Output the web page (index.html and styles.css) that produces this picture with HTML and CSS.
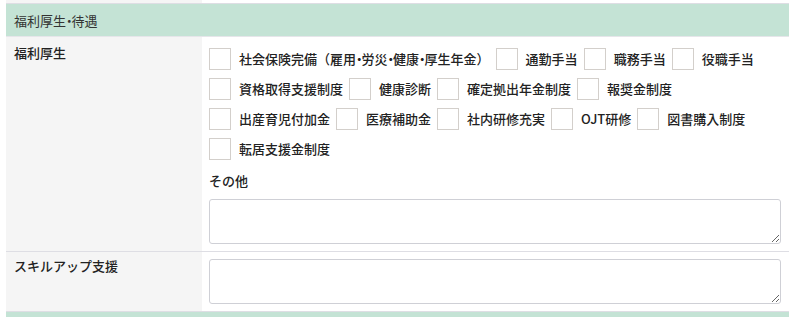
FILE: index.html
```html
<!DOCTYPE html>
<html lang="ja">
<head>
<meta charset="utf-8">
<link rel="stylesheet" href="styles.css">
</head>
<body>
<div class="form">
  <div class="prev-row"><div class="prev-label"></div><div class="prev-body"></div></div>
  <div class="section-head">福利厚生<span class="dot">・</span>待遇</div>
  <div class="row row-first">
    <div class="row-label">福利厚生</div>
    <div class="row-body">
      <div class="checks">
        <label class="check"><span class="box"></span><span class="txt">社会保険完備（雇用<span class="dot">・</span>労災<span class="dot">・</span>健康<span class="dot">・</span>厚生年金）</span></label>
        <label class="check"><span class="box"></span><span class="txt">通勤手当</span></label>
        <label class="check"><span class="box"></span><span class="txt">職務手当</span></label>
        <label class="check"><span class="box"></span><span class="txt">役職手当</span></label>
        <label class="check"><span class="box"></span><span class="txt">資格取得支援制度</span></label>
        <label class="check"><span class="box"></span><span class="txt">健康診断</span></label>
        <label class="check"><span class="box"></span><span class="txt">確定拠出年金制度</span></label>
        <label class="check"><span class="box"></span><span class="txt">報奨金制度</span></label>
        <label class="check"><span class="box"></span><span class="txt">出産育児付加金</span></label>
        <label class="check"><span class="box"></span><span class="txt">医療補助金</span></label>
        <label class="check"><span class="box"></span><span class="txt">社内研修充実</span></label>
        <label class="check"><span class="box"></span><span class="txt">OJT研修</span></label>
        <label class="check"><span class="box"></span><span class="txt">図書購入制度</span></label>
        <label class="check"><span class="box"></span><span class="txt">転居支援金制度</span></label>
      </div>
      <div class="sub-label">その他</div>
      <textarea class="area"></textarea>
    </div>
  </div>
  <div class="row row-second">
    <div class="row-label">スキルアップ支援</div>
    <div class="row-body">
      <textarea class="area"></textarea>
    </div>
  </div>
  <div class="section-head next"></div>
</div>
</body>
</html>
```

FILE: styles.css
```css
* { box-sizing: border-box; }
html, body { margin: 0; padding: 0; background: #fff; }
body {
  font-family: "Noto Sans CJK JP", "Noto Sans", sans-serif;
  font-size: 13px;
  color: #222;
}
.form {
  margin-left: 6px;
  width: 783px;
}
.prev-row {
  display: grid;
  grid-template-columns: 196px 1fr;
  height: 4px;
  border-bottom: 1px solid #dedee4;
}
.prev-label { background: #f5f5f5; }
.section-head {
  background: #c4e3d5;
  height: 33px;
  line-height: 33px;
  padding-left: 8px;
  color: #333;
  font-weight: 400;
  border-bottom: 1px solid #e6e6ea;
}
.section-head.next { height: 5px; border-bottom: none; }
.dot {
  font-feature-settings: "halt";
  letter-spacing: -1px;
}
.row {
  display: grid;
  grid-template-columns: 196px 1fr;
  border-bottom: 1px solid #dedee4;
}
.row-label {
  background: #f5f5f5;
  padding: 6px 8px;
  font-weight: 500;
  line-height: 20px;
}
.row-second .row-label { padding-top: 4px; }
.row-body {
  padding: 7px 8px 7px 7px;
}
.row-first .row-body { padding-top: 11px; }
.checks {
  display: flex;
  flex-wrap: wrap;
  row-gap: 8px;
}
.check {
  display: flex;
  align-items: center;
  margin-right: 6px;
  font-weight: 500;
  height: 22px;
}
.box {
  width: 22px;
  height: 22px;
  border: 1px solid #d3cfcb;
  background: #fff;
  margin-right: 8px;
}
.txt { line-height: 22px; white-space: nowrap; }
.sub-label {
  font-weight: 500;
  margin-top: 11px;
  line-height: 20px;
  margin-bottom: 8px;
}
.area {
  display: block;
  width: 572px;
  height: 45px;
  border: 1px solid #cfd0d6;
  border-radius: 3px;
  background: #fff;
  margin: 0;
  font: inherit;
}
```
